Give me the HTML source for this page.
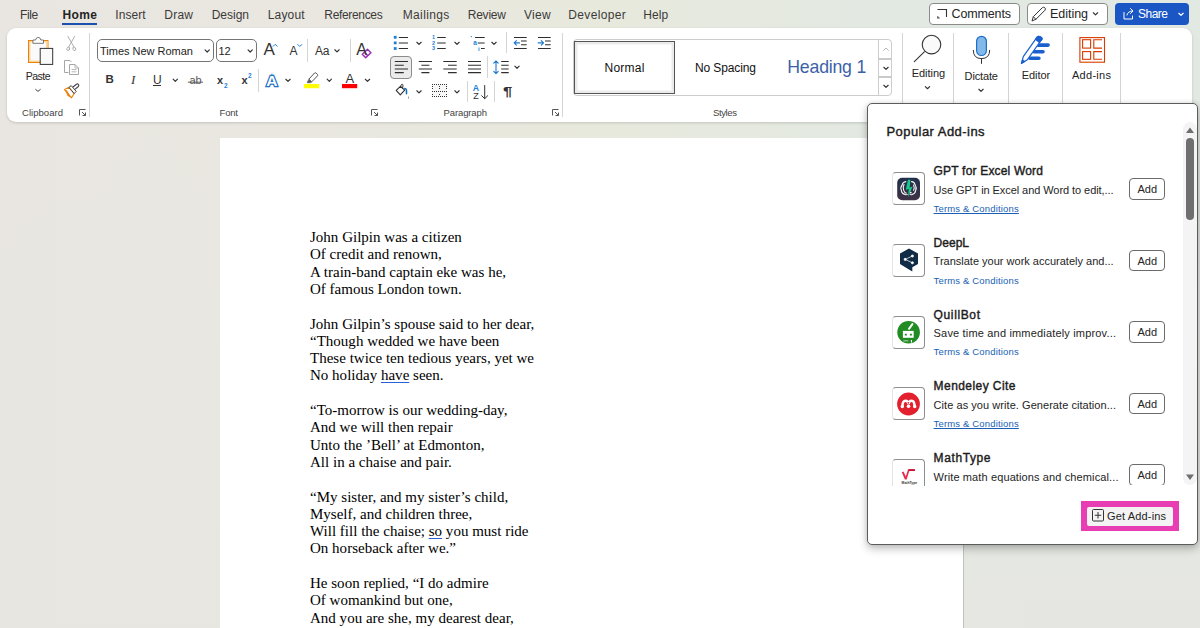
<!DOCTYPE html>
<html><head><meta charset="utf-8"><title>Word</title>
<style>
*{box-sizing:border-box;margin:0;padding:0}
html,body{width:1200px;height:628px;overflow:hidden}
body{font-family:"Liberation Sans",sans-serif;background:linear-gradient(to bottom,rgba(232,231,225,0) 20%,rgba(231,230,225,.75) 100%),linear-gradient(90deg,#e9e6e1 0%,#e9e7e0 25%,#e8e9dd 50%,#e2e9e2 75%,#e2e8e2 100%);position:relative;color:#242424}
.a{position:absolute}
.t{position:absolute;white-space:nowrap;line-height:1}
svg{position:absolute;overflow:visible}
#ribbon{position:absolute;left:7px;top:28px;width:1185px;height:94px;background:#fff;border-radius:9px;box-shadow:0 1px 3px rgba(0,0,0,.16)}
.vs{position:absolute;width:1px;background:#d4d4d4}
.box{position:absolute;border:1px solid #757575;border-radius:4px;background:#fff}
#page{position:absolute;left:220px;top:138px;width:744px;height:490px;background:#fff;border-right:1px solid #c2c2c0}
#doc{position:absolute;left:310px;top:229.1px;font-family:"Liberation Serif",serif;font-size:15px;line-height:17.3px;color:#000;white-space:pre;letter-spacing:0.01px}
#doc p{margin-bottom:17.3px}
#panel{position:absolute;left:867px;top:103px;width:331px;height:442px;background:#fff;border:1px solid #5c5c5c;border-radius:5px;box-shadow:0 4px 8px rgba(0,0,0,.24),0 0 5px rgba(0,0,0,.1)}
.ib{position:absolute;left:892px;width:33px;height:33px;border:1px solid #8e8e8e;border-left-color:#e4e4e4;border-radius:4px;background:#fff}
.addb{position:absolute;left:1129px;width:36px;height:21.5px;border:1px solid #6b6b6b;border-radius:4px;background:#fff}
</style></head><body>
<div class="a" style="left:62px;top:22.5px;width:35px;height:2.5px;background:#1b4fb0"></div>
<!-- top right buttons -->
<div class="box" style="left:929px;top:3px;width:90.500px;height:21.500px;border-color:#8a8a8a"></div>
<div class="box" style="left:1027px;top:3px;width:80.500px;height:21.500px;border-color:#8a8a8a"></div>
<div class="a" style="left:1115px;top:3px;width:74px;height:21.500px;border-radius:4px;background:#1b57c4"></div>
<div id="ribbon"></div>
<!-- separators -->
<div class="vs" style="left:89px;top:33px;height:84px"></div>
<div class="vs" style="left:562px;top:33px;height:84px"></div>
<div class="vs" style="left:307px;top:39px;height:23px"></div>
<div class="vs" style="left:350px;top:39px;height:23px"></div>
<div class="vs" style="left:258px;top:69px;height:23px"></div>
<div class="vs" style="left:506px;top:32px;height:21px"></div>
<div class="vs" style="left:487px;top:56px;height:22px"></div>
<div class="vs" style="left:467px;top:81px;height:21px"></div>
<div class="vs" style="left:494px;top:81px;height:21px"></div>
<div class="vs" style="left:902px;top:33px;height:84px"></div>
<div class="vs" style="left:953px;top:33px;height:84px"></div>
<div class="vs" style="left:1008px;top:33px;height:84px"></div>
<div class="vs" style="left:1062px;top:33px;height:84px"></div>
<div class="vs" style="left:1120px;top:33px;height:84px"></div>
<!-- font boxes -->
<div class="box" style="left:97px;top:39px;width:116.5px;height:23px;border-radius:5px"></div>
<div class="box" style="left:216px;top:39px;width:41px;height:23px;border-radius:5px"></div>
<!-- align-left selected -->
<div class="a" style="left:390px;top:56px;width:22px;height:22.5px;border:1px solid #8a8a8a;border-radius:4px;background:#ebebeb"></div>
<!-- styles gallery -->
<div class="a" style="left:572.5px;top:39px;width:319px;height:57px;border:1px solid #cdcdcd;border-radius:4px;background:#fff"></div>
<div class="a" style="left:574px;top:41px;width:101px;height:53px;border:1px solid #555;background:#fff;box-shadow:inset 0 0 0 2.500px #ebebeb"></div>
<div class="a" style="left:878px;top:40px;width:1px;height:55px;background:#cdcdcd"></div>
<div class="a" style="left:879px;top:58.400px;width:12px;height:1.300px;background:#c9c9c9"></div>
<div class="a" style="left:879px;top:76.300px;width:12px;height:1.300px;background:#c9c9c9"></div>
<svg style="left:0;top:0" width="1200" height="130" viewBox="0 0 1200 130" fill="none" stroke-linecap="round" stroke-linejoin="round">
<!-- chevrons small -->
<g stroke="#333" stroke-width="1.150">
<path d="M35.700 89.500l2.300 1.900 2.300-1.900" stroke="#444" stroke-width="1"/>
<path d="M205.05 49.88l2.15 2.15 2.15-2.15"/>
<path d="M248.05 49.88l2.15 2.15 2.15-2.15"/>
<path d="M173.15 79.17l2.15 2.15 2.15-2.15"/>
<path d="M334.85 49.77l2.15 2.15 2.15-2.15"/>
<path d="M285.85 79.27l2.15 2.15 2.15-2.15"/>
<path d="M327.15 79.17l2.15 2.15 2.15-2.15"/>
<path d="M365.35 79.27l2.15 2.15 2.15-2.15"/>
<path d="M416.85 42.27l2.15 2.15 2.15-2.15"/>
<path d="M454.85 42.27l2.15 2.15 2.15-2.15"/>
<path d="M491.85 42.27l2.15 2.15 2.15-2.15"/>
<path d="M514.85 66.12l2.15 2.15 2.15-2.15"/>
<path d="M416.85 90.77l2.15 2.15 2.15-2.15"/>
<path d="M454.85 90.77l2.15 2.15 2.15-2.15"/>
<path d="M883.85 67.27l2.15 2.15 2.15-2.15"/>
<path d="M883.85 85.27l2.15 2.15 2.15-2.15"/>
<path d="M925.35 86.57l2.15 2.15 2.15-2.15"/>
<path d="M978.85 89.27l2.15 2.15 2.15-2.15"/>
<path d="M1093.35 12.78l2.15 2.15 2.15-2.15"/>
</g>
<path d="M883.500 50.500l2.5-2.500 2.5 2.500" stroke="#b5b5b5"/>
<path d="M1178.85 13.28l2.15 2.15 2.15-2.15" stroke="#fff" stroke-width="1.200"/>
<!-- dialog launchers -->
<g stroke="#555" stroke-width="1" stroke-linecap="butt" stroke-linejoin="miter">
<path d="M79.500 115.500v-6h6M82 112l3.500 3.500M85.500 112.500v3h-3"/>
<path d="M371.500 115.500v-6h6M374 112l3.500 3.500M377.500 112.500v3h-3"/>
<path d="M552.500 115.500v-6h6M555 112l3.500 3.500M558.500 112.500v3h-3"/>
</g>
</svg>
<svg style="left:0;top:0" width="1200" height="130" viewBox="0 0 1200 130" fill="none">
<!-- Paste -->
<rect x="28.500" y="40.500" width="19.500" height="22" fill="#fafafa" stroke="#e8820c" stroke-width="1"/>
<rect x="29.700" y="41.700" width="17.100" height="19.600" fill="none" stroke="#fbd596" stroke-width="1.400"/>
<path d="M32.900 43.300v-3.300h2.700q.3-2.600 2.600-2.600t2.600 2.600h2.700v3.300z" fill="#fff" stroke="#6a6a6a" stroke-width=".9"/>
<rect x="40.200" y="48.400" width="12.500" height="16" fill="#fafafa" stroke="#333" stroke-width="1"/>
<!-- Scissors -->
<g stroke="#a6a6a6" stroke-width=".9" stroke-linecap="round">
<path d="M68 36.500l5.800 10.200M74.600 36.500l-5.800 10.200"/>
<ellipse cx="68.300" cy="48.800" rx="1.300" ry="1.900" transform="rotate(20 68.300 48.800)"/>
<ellipse cx="74.300" cy="48.800" rx="1.300" ry="1.900" transform="rotate(-20 74.300 48.800)"/>
</g>
<!-- Copy -->
<g stroke="#a6a6a6" stroke-width="1" stroke-linejoin="round">
<path d="M68.500 72.500h-4v-12h5.500l1.500 1.500"/>
<path d="M69.500 64.500h5.500l3.500 3.500v6.500h-9z" fill="#fff"/>
<path d="M75 64.500v3.500h3.500M71.500 69.500h5M71.500 71.800h5" stroke-width=".8"/>
</g>
<!-- Format painter -->
<path d="M64.500 89.500l4.500-2.200 5.200 6.200-2.700 4.300z" fill="#fff" stroke="#e8820c" stroke-width="1.200" stroke-linejoin="round"/>
<path d="M65.300 90.200l2.300 5.800 3.400 1.500-4.200-7.300z" fill="#e8820c"/>
<path d="M69 87.300l2.200-1.700 5 5.800-2 2.100z" fill="#fff" stroke="#444" stroke-width="1" stroke-linejoin="round"/>
<path d="M73.200 86.800l3.300-2.600q1.200-.7 2 .3t-.2 2l-3.100 2.600" stroke="#444" stroke-width="1.100" stroke-linecap="round"/>
<!-- grow/shrink carets -->
<g stroke="#1e7fd6" stroke-width="1" stroke-linecap="round" stroke-linejoin="round">
<path d="M273.200 46.300l2-2 2 2"/>
<path d="M297.800 44.500l2 2 2-2"/>
</g>
<!-- clear formatting eraser -->
<g stroke="#9b30b5" stroke-width="1.500" stroke-linejoin="round">
<path d="M362.300 54.300l5.200-5 3.400 3.500-5.200 5z" fill="#fff"/>
<path d="M364.600 52.400l3.300 3.400"/>
</g>
<!-- highlighter -->
<rect x="304" y="84" width="15.200" height="4.200" fill="#ffff00"/>
<path d="M308.800 79.200l5.800-6.200q.7-.6 1.400 0l1.500 1.400q.6.700 0 1.400l-5.800 6.100z" fill="#fff" stroke="#555" stroke-width="1" stroke-linejoin="round"/>
<path d="M308.800 79.400l2.800 2.600-1.200 .7h-3.300z" fill="#555" stroke="#555" stroke-width=".6" stroke-linejoin="round"/>
<!-- font colour bar -->
<rect x="342" y="84" width="15.200" height="4.200" fill="#ff0000"/>
<!-- U underline, strike -->
<path d="M153 85.500h8" stroke="#333" stroke-width="1"/>
<path d="M187.800 82.200h15.200" stroke="#555" stroke-width=".9"/>
<!-- Bullets -->
<g fill="#1e7fd6"><rect x="393.800" y="35.900" width="2.800" height="2.800"/><rect x="393.800" y="41.500" width="2.800" height="2.800"/><rect x="393.800" y="47.100" width="2.800" height="2.800"/></g>
<g stroke="#2e2e2e" stroke-width="1.050">
<path d="M398.800 37.500h9.200M398.800 42.900h9.200M398.800 48.500h9.200"/>
<path d="M437.200 37.500h8.500M437.200 42.900h8.500M437.200 48.500h8.500"/>
<path d="M475 37.500h9.700M477.700 42.900h7M481 48.500h3.700"/>
<!-- indent -->
<path d="M514 37.500h12.700M514 48.500h12.700M521 41h5.700M521 44.800h5.700"/>
<path d="M538 37.500h12.700M538 48.500h12.700M545 41h5.700M545 44.800h5.700"/>
<!-- align -->
<path d="M394.800 61.500h13.200M394.800 65.200h9M394.800 68.900h13.200M394.800 72.600h9"/>
<path d="M418.800 61.500h13.200M421.400 65.200h8M418.800 68.900h13.200M421.400 72.600h8"/>
<path d="M443.300 61.500h13.400M448 65.200h8.700M443.300 68.900h13.400M448 72.600h8.700"/>
<path d="M468 61.500h13M468 65.200h13M468 68.900h13M468 72.600h13"/>
<path d="M501.200 61.500h7.500M501.200 65.200h7.500M501.200 68.900h7.500M501.200 72.600h7.500"/>
</g>
<g stroke="#1a78d2" stroke-width="1.100" stroke-linecap="round" stroke-linejoin="round">
<path d="M514.200 42.900h5.300M516.400 40.700l-2.200 2.200 2.200 2.200"/>
<path d="M538.200 42.900h5.300M541.300 40.700l2.200 2.200-2.200 2.200"/>
<path d="M496 61v12.600M493.800 63.200l2.200-2.200 2.200 2.200M493.800 71.400l2.200 2.200 2.200-2.200"/>
</g>
<circle cx="471.300" cy="36.600" r=".7" fill="#1e7fd6"/>
<!-- shading bucket -->
<path d="M396.200 90.300l4.200-4 4.300 3.800-4.400 4.800z" stroke="#2e2e2e" stroke-width="1.100" stroke-linejoin="round" fill="#fff"/>
<path d="M400.400 87.500l.7-2.400q.4-1 1.200-.8t.7 1.200l-.4 2.700" stroke="#2e2e2e" stroke-width="1" fill="none" stroke-linecap="round"/>
<path d="M404.800 88.600q1.700 .2 1.700 2v3.100" stroke="#0f6cbd" stroke-width="1.500" stroke-linecap="round" fill="none"/>
<path d="M408.500 96.500v2.200" stroke="#888" stroke-width=".8"/>
<!-- borders -->
<rect x="432.500" y="84.500" width="14" height="12" fill="#f7f7f7"/>
<path d="M432 84h1v1h-1zM432 86h1v1h-1zM432 88h1v1h-1zM432 91h1v1h-1zM432 94h1v1h-1zM432 96h1v1h-1zM434 84h1v1h-1zM434 91h1v1h-1zM434 96h1v1h-1zM436 84h1v1h-1zM436 91h1v1h-1zM436 96h1v1h-1zM438 84h1v1h-1zM438 91h1v1h-1zM438 96h1v1h-1zM439 86h1v1h-1zM439 88h1v1h-1zM439 94h1v1h-1zM440 84h1v1h-1zM440 91h1v1h-1zM440 96h1v1h-1zM442 84h1v1h-1zM442 91h1v1h-1zM442 96h1v1h-1zM444 84h1v1h-1zM444 91h1v1h-1zM444 96h1v1h-1zM446 84h1v1h-1zM446 86h1v1h-1zM446 88h1v1h-1zM446 91h1v1h-1zM446 94h1v1h-1zM446 96h1v1h-1z" fill="#333"/>
<!-- sort arrow -->
<path d="M484.700 85.500v13M481.700 95.700l3 3 3-3" stroke="#333" stroke-width="1" stroke-linecap="round" stroke-linejoin="round"/>
<!-- Editing magnifier -->
<circle cx="931.500" cy="44.600" r="9.300" stroke="#333" stroke-width="1.100" fill="#fafafa"/>
<path d="M924.300 51.800l-10 9.800" stroke="#333" stroke-width="1.100" stroke-linecap="round"/>
<!-- Dictate mic -->
<rect x="976.600" y="36.300" width="9.800" height="19.200" rx="4.900" fill="#83b9ea" stroke="#1e6fc8" stroke-width="1.200"/>
<path d="M973.300 50.300q0 8.300 8.200 8.300t8.200-8.300M981.500 58.600v4.800" stroke="#333" stroke-width="1" stroke-linecap="round"/>
<!-- Editor pen -->
<g stroke="#1b5fcf" stroke-linecap="round" stroke-width="3.600">
<path d="M1038 45.100h10.100M1034 51.800h9M1030 58.200h8.900"/>
</g>
<path d="M1021.400 63.500L1023.300 56.700L1036.900 37.400q1.400-1.900 3.300-.6l1.200 .8q1.600 1.200-.5 2.900L1027.300 59.800z" fill="#fff" stroke="#1b5fcf" stroke-width="1.200" stroke-linejoin="round"/>
<path d="M1036.900 37.400q1.400-1.900 3.300-.6l1.200 .8q1.600 1.200-.5 2.900l-1.400 2-4-3.100z" fill="#1b5fcf" stroke="#1b5fcf" stroke-width="1.200" stroke-linejoin="round"/>
<path d="M1021.400 63.500l1.100-4 2.600 2z" fill="#1b5fcf" stroke="#1b5fcf" stroke-width=".8" stroke-linejoin="round"/>
<!-- Add-ins -->
<g stroke="#d83b01" stroke-width="1.100">
<rect x="1079.900" y="37.600" width="24.600" height="24.600"/>
<rect x="1082.600" y="39.700" width="8" height="8.400"/>
<rect x="1082.600" y="51.600" width="8" height="7.700"/>
<path d="M1102 39.700h-8.200v8.400h8.200M1102 51.600h-8.200v7.700h8.200"/>
</g>
<!-- Comments icon -->
<path d="M937.500 9.500h9v7.500M937.800 16.300v1.700h1.800" stroke="#333" stroke-width="1.100" stroke-linejoin="miter" fill="none"/>
<!-- Editing pencil -->
<path d="M1032 21l1.300-4.300 9-9q1.300-1 2.500 0t.2 2.500l-9 9zM1033.300 16.700l2.800 2.800" stroke="#333" stroke-width="1" stroke-linejoin="round" fill="#fff"/>
<!-- Share icon -->
<path d="M1124 12.500v6.500h8.500v-3M1127 15q1-4 5.500-4M1130.500 8.500l2.500 2.500-2.500 2.500" stroke="#fff" stroke-width="1" stroke-linecap="round" stroke-linejoin="round"/>
</svg>

<div id="page"></div>
<div id="doc"><p>John Gilpin was a citizen
Of credit and renown,
A train-band captain eke was he,
Of famous London town.</p><p>John Gilpin’s spouse said to her dear,
“Though wedded we have been
These twice ten tedious years, yet we
No holiday <u style="text-decoration-color:#2b5fd9;text-underline-offset:2.400px;text-decoration-thickness:1.100px">have</u> seen.</p><p>“To-morrow is our wedding-day,
And we will then repair
Unto the ’Bell’ at Edmonton,
All in a chaise and pair.</p><p>“My sister, and my sister’s child,
Myself, and children three,
Will fill the chaise; <u style="text-decoration-color:#2b5fd9;text-underline-offset:2.400px;text-decoration-thickness:1.100px">so</u> you must ride
On horseback after we.”</p><p>He soon replied, “I do admire
Of womankind but one,
And you are she, my dearest dear,</p></div>
<div id="panel"></div>
<div class="ib" style="top:172.1px;"></div>
<div class="addb" style="top:178.2px"></div>
<div class="ib" style="top:243.8px;"></div>
<div class="addb" style="top:249.7px"></div>
<div class="ib" style="top:315.6px;"></div>
<div class="addb" style="top:321.2px"></div>
<div class="ib" style="top:387.4px;"></div>
<div class="addb" style="top:392.7px"></div>
<div class="ib" style="top:459.1px;border-bottom:none;border-radius:4px 4px 0 0;height:26.9px;"></div>
<div class="a" style="left:1129px;top:464.2px;width:36px;height:21px;overflow:hidden"><div class="addb" style="left:0;top:0"></div></div>
<div class="a" style="left:1182.5px;top:122px;width:14px;height:363px;background:#f4f4f4;border-radius:7px"></div>
<div class="a" style="left:1186px;top:138px;width:8.200px;height:82px;background:#6f6f6f;border-radius:4px"></div>
<svg style="left:0;top:0" width="1200" height="628" viewBox="0 0 1200 628"><path d="M1186 133l4-5.500 4 5.500z" fill="#6f6f6f"/><path d="M1186 474.500l4 5.500 4-5.500z" fill="#6f6f6f"/></svg>
<div class="a" style="left:1081px;top:501px;width:98px;height:30px;background:#e83eb3"></div>
<div class="a" style="left:1087px;top:507px;width:86px;height:18.500px;background:#f3f3f3;border-radius:2px"></div>
<svg style="left:1091.500px;top:509.300px" width="12" height="12.500" viewBox="0 0 12 12.500" fill="none" stroke="#333" stroke-width="1"><rect x=".5" y=".5" width="11" height="11.500" rx="1"/><path d="M6 3v6.500M2.800 6.250h6.400"/></svg>
<svg style="left:0;top:0" width="1200" height="628" viewBox="0 0 1200 628" fill="none">
<defs><linearGradient id="gg" x1="0" y1="0" x2="0" y2="1"><stop offset="0" stop-color="#21304b"/><stop offset="1" stop-color="#413145"/></linearGradient></defs>
<!-- GPT -->
<rect x="897.200" y="177.800" width="22.800" height="22.400" rx="5" fill="url(#gg)"/>
<g stroke="#f4f4f4" stroke-width="1.100" stroke-linecap="round">
<path d="M905.800 181.600q-3 .4-3.600 3.200-2.200 2.700-.8 5.600 .2 3.200 3.600 4 1.300 .6 2.300 0"/>
<path d="M904 184.500q-1.500 2.800-.4 5.600t2.600 3"/>
<path d="M911.500 181.600q3 .3 3.600 3.200 1.900 2.700 .6 5.600-.4 3.200-3.400 4-1.300 .6-2.300 0"/>
<path d="M913.600 185q1.200 2.700 0 5.300"/>
</g>
<path d="M908 179.800h2.400l-.7 7.700 2.900-.9-4.700 10.700 .9-8.300-3 .8z" fill="#17c98b"/>
<circle cx="910.800" cy="192.600" r=".9" fill="#f4f4f4"/>
<!-- DeepL -->
<path d="M909 248.600l9 5v10.400l-5.700 3.300v4.300l-5-3-7.300-4.600v-10.400z" fill="#0f2b46"/>
<g fill="#fff" stroke="#fff" stroke-width=".7">
<path d="M912.400 256l-7.200 3.400 7.200 3.400" fill="none"/>
<circle cx="905.200" cy="259.400" r="1.100"/><circle cx="912.400" cy="256" r="1.100"/><circle cx="912.400" cy="262.800" r="1.100"/>
</g>
<!-- QuillBot -->
<circle cx="908.600" cy="332.200" r="11.300" fill="#238b23"/>
<rect x="902.900" y="330.900" width="10.800" height="6.900" fill="#fff"/>
<rect x="904.800" y="333.800" width="2" height="1.700" fill="#238b23"/><rect x="909.900" y="333.800" width="2" height="1.700" fill="#238b23"/>
<path d="M903.300 340.200h5v1.200h-5z" fill="#fff" opacity=".55"/><path d="M910.900 340h1.100v2.600h-1.100z" fill="#fff"/>
<path d="M909 328.800l3.400-4.700" stroke="#fff" stroke-width="2" stroke-linecap="round"/>
<!-- Mendeley -->
<circle cx="908.500" cy="404" r="11.400" fill="#e3202d"/>
<path d="M902.400 406q.2-5.300 3-5.300t3.100 3.500q.4-3.500 3.100-3.500t3 5.300" stroke="#fff" stroke-width="2.500" fill="none" stroke-linecap="round"/>
<circle cx="902.300" cy="406.500" r="1.700" fill="#fff"/><circle cx="908.500" cy="406.300" r="1.800" fill="#fff"/><circle cx="914.700" cy="406.500" r="1.700" fill="#fff"/>
<circle cx="908.300" cy="402.800" r=".9" fill="#e3202d"/>
<!-- MathType -->
<path d="M901.800 472.200l1.700-.6 2.300 5 2.300-7.300h6.700v1.600h-5.500l-2.700 8.700h-1.700z" fill="#e8294b"/>
<path d="M908.300 469.300h6.500v1.600h-6z" fill="#c4122f"/>
<text x="901.600" y="483.800" font-family="Liberation Sans, sans-serif" font-size="3.400" fill="#333" font-weight="bold">MathType</text>
</svg>


<div class="t" style="left:20.00px;top:8.94px;font-size:12px;letter-spacing:-0.348px;color:#3b3a39;transform:scaleY(1.09);">File</div>
<div class="t" style="left:62.50px;top:8.94px;font-size:12px;letter-spacing:0.385px;font-weight:bold;color:#242424;transform:scaleY(1.09);">Home</div>
<div class="t" style="left:115.30px;top:8.94px;font-size:12px;letter-spacing:0.077px;color:#3b3a39;transform:scaleY(1.09);">Insert</div>
<div class="t" style="left:164.30px;top:8.94px;font-size:12px;letter-spacing:0.228px;color:#3b3a39;transform:scaleY(1.09);">Draw</div>
<div class="t" style="left:211.70px;top:8.94px;font-size:12px;letter-spacing:-0.012px;color:#3b3a39;transform:scaleY(1.09);">Design</div>
<div class="t" style="left:267.70px;top:8.94px;font-size:12px;letter-spacing:0.194px;color:#3b3a39;transform:scaleY(1.09);">Layout</div>
<div class="t" style="left:324.30px;top:8.94px;font-size:12px;letter-spacing:-0.331px;color:#3b3a39;transform:scaleY(1.09);">References</div>
<div class="t" style="left:402.70px;top:8.94px;font-size:12px;letter-spacing:0.369px;color:#3b3a39;transform:scaleY(1.09);">Mailings</div>
<div class="t" style="left:467.70px;top:8.94px;font-size:12px;letter-spacing:-0.212px;color:#3b3a39;transform:scaleY(1.09);">Review</div>
<div class="t" style="left:524.00px;top:8.94px;font-size:12px;letter-spacing:0.301px;color:#3b3a39;transform:scaleY(1.09);">View</div>
<div class="t" style="left:568.30px;top:8.94px;font-size:12px;letter-spacing:0.337px;color:#3b3a39;transform:scaleY(1.09);">Developer</div>
<div class="t" style="left:643.30px;top:8.94px;font-size:12px;letter-spacing:0.104px;color:#3b3a39;transform:scaleY(1.09);">Help</div>
<div class="t" style="left:951.60px;top:8.19px;font-size:12.5px;letter-spacing:-0.148px;color:#242424;">Comments</div>
<div class="t" style="left:1049.90px;top:8.19px;font-size:12.5px;letter-spacing:-0.006px;color:#242424;">Editing</div>
<div class="t" style="left:1138.10px;top:8.44px;font-size:12px;letter-spacing:-0.533px;color:#fff;">Share</div>
<div class="t" style="left:22.00px;top:108.16px;font-size:9.5px;letter-spacing:0.041px;color:#444;">Clipboard</div>
<div class="t" style="left:219.50px;top:108.16px;font-size:9.5px;letter-spacing:-0.172px;color:#444;">Font</div>
<div class="t" style="left:443.50px;top:108.16px;font-size:9.5px;letter-spacing:-0.109px;color:#444;">Paragraph</div>
<div class="t" style="left:713.00px;top:108.16px;font-size:9.5px;letter-spacing:-0.375px;color:#444;">Styles</div>
<div class="t" style="left:25.70px;top:71.17px;font-size:10.5px;letter-spacing:-0.515px;color:#242424;">Paste</div>
<div class="t" style="left:100.00px;top:46.13px;font-size:11px;letter-spacing:-0.009px;color:#242424;">Times New Roman</div>
<div class="t" style="left:218.50px;top:46.13px;font-size:11px;letter-spacing:-0.050px;color:#242424;">12</div>
<div class="t" style="left:604.50px;top:62.44px;font-size:12px;letter-spacing:0.246px;color:#111;">Normal</div>
<div class="t" style="left:695.00px;top:62.44px;font-size:12px;letter-spacing:-0.116px;color:#111;">No Spacing</div>
<div class="t" style="left:787.30px;top:58.85px;font-size:17.7px;letter-spacing:-0.205px;color:#3c62a5;">Heading 1</div>
<div class="t" style="left:911.70px;top:67.93px;font-size:11px;letter-spacing:-0.040px;color:#242424;">Editing</div>
<div class="t" style="left:964.60px;top:70.78px;font-size:11px;letter-spacing:-0.142px;color:#242424;">Dictate</div>
<div class="t" style="left:1021.70px;top:69.63px;font-size:11px;letter-spacing:-0.030px;color:#242424;">Editor</div>
<div class="t" style="left:1072.00px;top:69.93px;font-size:11px;letter-spacing:0.284px;color:#242424;">Add-ins</div>
<div class="t" style="left:886.40px;top:125.45px;font-size:13px;letter-spacing:0.458px;color:#1c1c1c;-webkit-text-stroke:.4px #1c1c1c;">Popular Add-ins</div>
<div class="t" style="left:933.60px;top:165.14px;font-size:12px;letter-spacing:0.184px;color:#1c1c1c;-webkit-text-stroke:.4px #1c1c1c;">GPT for Excel Word</div>
<div class="t" style="left:933.60px;top:184.63px;font-size:11px;letter-spacing:-0.067px;color:#242424;">Use GPT in Excel and Word to edit,...</div>
<div class="t" style="left:933.60px;top:203.86px;font-size:9.5px;letter-spacing:0.160px;color:#1a5fb4;text-decoration:underline;">Terms &amp; Conditions</div>
<div class="t" style="left:1137.50px;top:184.43px;font-size:11px;letter-spacing:-0.039px;color:#242424;">Add</div>
<div class="t" style="left:933.60px;top:236.92px;font-size:12px;letter-spacing:0.006px;color:#1c1c1c;-webkit-text-stroke:.4px #1c1c1c;">DeepL</div>
<div class="t" style="left:933.60px;top:256.41px;font-size:11px;letter-spacing:0.001px;color:#242424;">Translate your work accurately and...</div>
<div class="t" style="left:933.60px;top:275.64px;font-size:9.5px;letter-spacing:0.160px;color:#1a5fb4;">Terms &amp; Conditions</div>
<div class="t" style="left:1137.50px;top:255.93px;font-size:11px;letter-spacing:-0.039px;color:#242424;">Add</div>
<div class="t" style="left:933.60px;top:308.70px;font-size:12px;letter-spacing:0.624px;color:#1c1c1c;-webkit-text-stroke:.4px #1c1c1c;">QuillBot</div>
<div class="t" style="left:933.60px;top:328.19px;font-size:11px;letter-spacing:0.174px;color:#242424;">Save time and immediately improv...</div>
<div class="t" style="left:933.60px;top:347.42px;font-size:9.5px;letter-spacing:0.160px;color:#1a5fb4;">Terms &amp; Conditions</div>
<div class="t" style="left:1137.50px;top:327.43px;font-size:11px;letter-spacing:-0.039px;color:#242424;">Add</div>
<div class="t" style="left:933.60px;top:380.48px;font-size:12px;letter-spacing:0.432px;color:#1c1c1c;-webkit-text-stroke:.4px #1c1c1c;">Mendeley Cite</div>
<div class="t" style="left:933.60px;top:399.97px;font-size:11px;letter-spacing:0.053px;color:#242424;">Cite as you write. Generate citation...</div>
<div class="t" style="left:933.60px;top:419.20px;font-size:9.5px;letter-spacing:0.160px;color:#1a5fb4;text-decoration:underline;">Terms &amp; Conditions</div>
<div class="t" style="left:1137.50px;top:398.93px;font-size:11px;letter-spacing:-0.039px;color:#242424;">Add</div>
<div class="t" style="left:933.60px;top:452.26px;font-size:12px;letter-spacing:0.600px;color:#1c1c1c;-webkit-text-stroke:.4px #1c1c1c;">MathType</div>
<div class="t" style="left:933.60px;top:471.75px;font-size:11px;letter-spacing:0.118px;color:#242424;">Write math equations and chemical...</div>
<div class="t" style="left:1137.50px;top:470.43px;font-size:11px;letter-spacing:-0.039px;color:#242424;">Add</div>
<div class="t" style="left:1107.00px;top:510.93px;font-size:11px;letter-spacing:0.152px;color:#242424;">Get Add-ins</div>
<div class="t" style="left:263.50px;top:41.10px;font-size:17px;letter-spacing:0.000px;color:#333;">A</div>
<div class="t" style="left:289.50px;top:45.14px;font-size:12px;letter-spacing:0.000px;color:#333;">A</div>
<div class="t" style="left:315.00px;top:45.04px;font-size:12px;letter-spacing:-0.188px;color:#333;">Aa</div>
<div class="t" style="left:356.30px;top:41.58px;font-size:16px;letter-spacing:0.000px;color:#333;">A</div>
<div class="t" style="left:105.50px;top:73.88px;font-size:11.5px;letter-spacing:0.000px;font-weight:bold;color:#333;">B</div>
<div class="t" style="left:131.00px;top:73.15px;font-size:13px;letter-spacing:0.000px;font-family:'Liberation Serif',serif;font-style:italic;color:#333;">I</div>
<div class="t" style="left:153.00px;top:73.64px;font-size:12px;letter-spacing:0.000px;color:#333;">U</div>
<div class="t" style="left:189.50px;top:75.23px;font-size:11px;letter-spacing:-0.050px;color:#555;">ab</div>
<div class="t" style="left:217.00px;top:75.23px;font-size:11px;letter-spacing:0.000px;font-weight:bold;color:#333;">x</div>
<div class="t" style="left:223.90px;top:83.12px;font-size:6.5px;letter-spacing:0.000px;color:#1e7fd6;font-weight:bold;">2</div>
<div class="t" style="left:241.40px;top:75.23px;font-size:11px;letter-spacing:0.000px;font-weight:bold;color:#333;">x</div>
<div class="t" style="left:248.10px;top:72.82px;font-size:6.5px;letter-spacing:0.000px;color:#1e7fd6;font-weight:bold;">2</div>
<div class="t" style="left:266.20px;top:72.83px;font-size:15.5px;letter-spacing:0.000px;font-weight:bold;color:#fff;-webkit-text-stroke:2.500px #1e6fc8;paint-order:stroke fill;">A</div>
<div class="t" style="left:345.60px;top:72.05px;font-size:13px;letter-spacing:0.000px;color:#333;">A</div>
<div class="t" style="left:432.00px;top:34.91px;font-size:5.5px;letter-spacing:0.000px;color:#1e7fd6;font-weight:bold;">1</div>
<div class="t" style="left:432.00px;top:40.51px;font-size:5.5px;letter-spacing:0.000px;color:#1e7fd6;font-weight:bold;">2</div>
<div class="t" style="left:432.00px;top:46.11px;font-size:5.5px;letter-spacing:0.000px;color:#1e7fd6;font-weight:bold;">3</div>
<div class="t" style="left:473.20px;top:39.62px;font-size:6.5px;letter-spacing:0.000px;color:#1e7fd6;font-weight:bold;">a</div>
<div class="t" style="left:478.00px;top:45.67px;font-size:6px;letter-spacing:0.000px;color:#1e7fd6;font-weight:bold;">i</div>
<div class="t" style="left:472.80px;top:84.00px;font-size:8.8px;letter-spacing:0.000px;color:#1e7fd6;font-weight:bold;">A</div>
<div class="t" style="left:473.30px;top:91.60px;font-size:9px;letter-spacing:0.000px;color:#333;">Z</div>
<div class="t" style="left:503.60px;top:84.95px;font-size:13px;letter-spacing:0.000px;font-weight:bold;transform:scaleX(1.280);transform-origin:50% 50%;color:#333;">¶</div>
</body></html>
